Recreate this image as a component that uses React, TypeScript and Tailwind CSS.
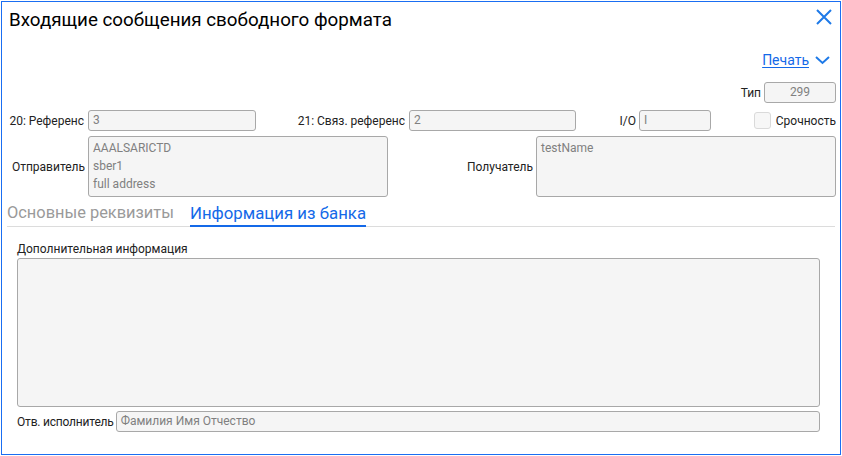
import React from "react";

const font = { fontFamily: 'Roboto, "Noto Sans", sans-serif' };

function Field({ w, children, center }: { w: string; children?: React.ReactNode; center?: boolean }) {
  return (
    <div
      className={`${w} h-[21px] shrink-0 rounded-[3px] border border-[#a8a8a8] bg-[#f5f5f5] px-[4px] text-[12px] leading-[19px] text-[#808080] whitespace-nowrap ${center ? "text-center" : ""}`}
    >
      {children}
    </div>
  );
}

export default function App() {
  return (
    <div className="w-[842px] h-[456px] bg-white p-px" style={font}>
      <div className="w-[840px] h-[454px] border border-[#1a6ef2] flex flex-col relative whitespace-nowrap">
        <div className="flex items-start justify-between pl-[7px] pr-[8px] pt-[3px]">
          <div className="text-[18.8px] leading-[30px] text-black">Входящие сообщения свободного формата</div>
          <svg width="16" height="16" viewBox="0 0 16 16" className="mt-[4px]">
            <path d="M1 1 L15 15 M15 1 L1 15" stroke="#1e7ae8" strokeWidth="2" fill="none" />
          </svg>
        </div>
        <div className="flex justify-end items-center pr-[10px] mt-[15px] h-[20px]">
          <span className="text-[14px] text-[#1469e8] underline underline-offset-2">Печать</span>
          <svg width="15" height="9" viewBox="0 0 15 9" className="ml-[6px]">
            <path d="M1 1 L7.5 7 L14 1" stroke="#1e7ae8" strokeWidth="2" fill="none" />
          </svg>
        </div>
        <div className="flex justify-end items-center pr-[4px] mt-[12px] text-[12px] text-[#222]">
          <span className="mr-[3px]">Тип</span>
          <Field w="w-[72px]" center>299</Field>
        </div>
        <div className="flex items-center pl-[5px] mt-[7px] text-[12px] text-[#222]">
          <div className="w-[249px] flex items-center justify-end">
            <span className="mr-[4px]">20: Референс</span>
            <Field w="w-[168px]">3</Field>
          </div>
          <div className="w-[320px] flex items-center justify-end">
            <span className="mr-[4px]">21: Связ. референс</span>
            <Field w="w-[167px]">2</Field>
          </div>
          <div className="w-[135px] flex items-center justify-end">
            <span className="mr-[3px]">I/O</span>
            <Field w="w-[72px]">I</Field>
          </div>
          <div className="w-[125px] flex items-center justify-end">
            <div className="w-[17px] h-[17px] rounded-[3px] border border-[#dadada] bg-[#f7f7f7] mr-[5px]" />
            <span>Срочность</span>
          </div>
        </div>
        <div className="flex items-center pl-[5px] mt-[5px] text-[12px] text-[#222]">
          <div className="w-[381px] flex items-center justify-end">
            <span className="mr-[3px]">Отправитель</span>
            <div className="w-[300px] h-[61px] shrink-0 rounded-[3px] border border-[#a8a8a8] bg-[#f5f5f5] px-[4px] pt-[2px] text-[12px] leading-[18px] text-[#808080]">
              <div>AAALSARICTD</div>
              <div>sber1</div>
              <div>full address</div>
            </div>
          </div>
          <div className="w-[448px] flex items-center justify-end">
            <span className="mr-[3px]">Получатель</span>
            <div className="w-[300px] h-[61px] shrink-0 rounded-[3px] border border-[#a8a8a8] bg-[#f5f5f5] px-[4px] pt-[2px] text-[12px] leading-[18px] text-[#808080]">
              <div>testName</div>
            </div>
          </div>
        </div>
        <div className="mx-[5px] mt-[4px] flex items-end border-b border-[#dcdcdc] h-[26px]">
          <div className="text-[16.4px] leading-[22px] text-[#9a9a9a] pb-[2px]">Основные реквизиты</div>
          <div className="ml-[16px] text-[16.8px] leading-[22px] text-[#1469e8] border-b-2 border-[#1469e8] mb-[-1px] pb-[1px]">Информация из банка</div>
        </div>
        <div className="pl-[15px] text-[12px] text-[#222]">
          <div className="w-[803px] mt-[13px]">
            <div className="leading-[18px]">Дополнительная информация</div>
            <div className="w-full h-[149px] rounded-[3px] border border-[#a8a8a8] bg-[#f5f5f5]" />
            <div className="flex items-center mt-[4px]">
              <span className="mr-[2px] tracking-[-0.2px]">Отв. исполнитель</span>
              <div className="flex-1 h-[21px] rounded-[3px] border border-[#a8a8a8] bg-[#f5f5f5] px-[4px] leading-[19px] text-[#808080]">
                Фамилия Имя Отчество
              </div>
            </div>
          </div>
        </div>
      </div>
    </div>
  );
}
